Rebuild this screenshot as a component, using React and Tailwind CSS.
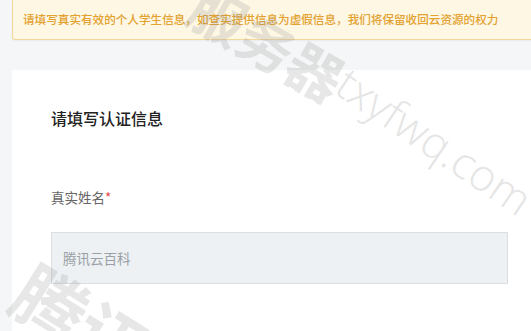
export default function App() {
  return (
    <div className="relative h-[331px] w-[531px] overflow-hidden bg-[#f4f6f7] font-['Noto_Sans_CJK_SC','Noto_Sans',sans-serif]">
      <div className="w-[560px] pl-[12px]">
        {/* Notice */}
        <div className="flex h-[40px] items-center rounded-b-[3px] border-x border-b border-[#f2d99a] bg-[#fdf7e4] pl-[10px] shadow-[0_1px_2px_rgba(0,0,0,0.05)]">
          <span className="text-[11.6px] leading-none font-medium text-[#e3a12f] whitespace-nowrap">
            请填写真实有效的个人学生信息，如查实提供信息为虚假信息，我们将保留收回云资源的权力
          </span>
        </div>

        {/* Form card */}
        <div className="mt-[30px] h-[300px] bg-white pl-[39px] pt-[38px]">
          <h2 className="text-[16px] leading-[20px] font-medium text-[#222]">请填写认证信息</h2>

          <div className="mt-[60px] text-[13.5px] leading-[18px] text-[#666]">
            真实姓名<span className="text-[#e54545]">*</span>
          </div>

          <div className="mt-[26px] flex h-[52px] w-[457px] items-center border border-[#dcdfe2] bg-[#edf1f3] pl-[11px]">
            <span className="text-[13.5px] text-[#9aa0a6]">腾讯云百科</span>
          </div>
        </div>
      </div>

      {/* Watermark */}
      <div className="pointer-events-none absolute left-[195px] top-[-28px] rotate-[30deg] origin-left text-[56px] leading-none font-bold text-[#8a8a8a] opacity-20 whitespace-nowrap">
        服务器
      </div>
      <div className="pointer-events-none absolute left-[342px] top-[56px] rotate-[34deg] origin-left font-['Open_Sans',sans-serif] text-[44px] leading-none font-light text-[#9a9a9a] opacity-25 whitespace-nowrap">
        txyfwq.com
      </div>
      <div className="pointer-events-none absolute left-[22px] top-[246px] rotate-[32deg] origin-left text-[72px] leading-none font-bold text-[#8a8a8a] opacity-20 whitespace-nowrap">
        腾讯
      </div>
    </div>
  );
}
